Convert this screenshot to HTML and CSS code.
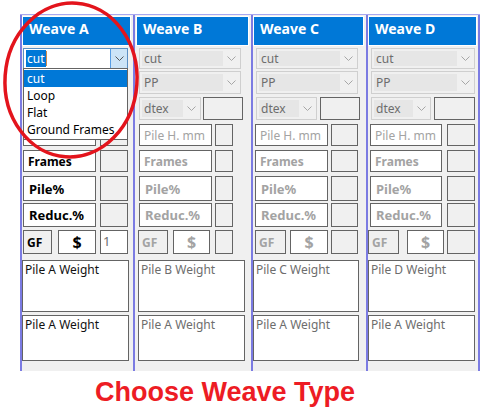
FILE: index.html
```html
<!DOCTYPE html>
<html>
<head>
<meta charset="utf-8">
<link rel="stylesheet" href="styles.css">
</head>
<body>
<div class="stage">
  <div class="panel">
    <div class="col col-a">
      <div class="hdr">Weave A</div>
      <div class="dd dd1 act">
        <span class="dd-val"><span class="sel-txt">cut</span><span class="caret"></span></span>
        <span class="dd-btn"><svg class="chev" width="9" height="5" viewBox="0 0 9 5"><polyline points="0.5,0.5 4.5,4.5 8.5,0.5"/></svg></span>
        <div class="dd-list">
          <div class="opt sel">cut</div>
          <div class="opt">Loop</div>
          <div class="opt">Flat</div>
          <div class="opt">Ground Frames</div>
        </div>
      </div>
      <div class="dd dd2"><span class="dd-val">PP</span><span class="dd-btn"><svg class="chev" width="9" height="5" viewBox="0 0 9 5"><polyline points="0.5,0.5 4.5,4.5 8.5,0.5"/></svg></span></div>
      <div class="line rowt"><div class="dd dtex"><span class="dd-val">dtex</span><span class="dd-btn"><svg class="chev" width="9" height="5" viewBox="0 0 9 5"><polyline points="0.5,0.5 4.5,4.5 8.5,0.5"/></svg></span></div><div class="box tbox"></div></div>
      <div class="line row"><div class="lbl">Pile H. mm</div><div class="box rbox"></div></div>
      <div class="line row"><div class="lbl">Frames</div><div class="box rbox"></div></div>
      <div class="line row-p"><div class="lbl big">Pile%</div><div class="box rbox"></div></div>
      <div class="line row-r"><div class="lbl big">Reduc.%</div><div class="box rbox"></div></div>
      <div class="line row-g"><div class="box gf">GF</div><div class="box usd">$</div><div class="box rbox num">1</div></div>
      <div class="ta ta1">Pile A Weight</div>
      <div class="ta ta2">Pile A Weight</div>
    </div>

    <div class="col col-b dis">
      <div class="hdr">Weave B</div>
      <div class="dd dd1"><span class="dd-val">cut</span><span class="dd-btn"><svg class="chev" width="9" height="5" viewBox="0 0 9 5"><polyline points="0.5,0.5 4.5,4.5 8.5,0.5"/></svg></span></div>
      <div class="dd dd2"><span class="dd-val">PP</span><span class="dd-btn"><svg class="chev" width="9" height="5" viewBox="0 0 9 5"><polyline points="0.5,0.5 4.5,4.5 8.5,0.5"/></svg></span></div>
      <div class="line rowt"><div class="dd dtex"><span class="dd-val">dtex</span><span class="dd-btn"><svg class="chev" width="9" height="5" viewBox="0 0 9 5"><polyline points="0.5,0.5 4.5,4.5 8.5,0.5"/></svg></span></div><div class="box tbox"></div></div>
      <div class="line row"><div class="lbl reg">Pile H. mm</div><div class="box rbox"></div></div>
      <div class="line row"><div class="lbl">Frames</div><div class="box rbox"></div></div>
      <div class="line row-p"><div class="lbl big">Pile%</div><div class="box rbox"></div></div>
      <div class="line row-r"><div class="lbl big">Reduc.%</div><div class="box rbox"></div></div>
      <div class="line row-g"><div class="box gf">GF</div><div class="box usd">$</div><div class="box rbox"></div></div>
      <div class="ta ta1">Pile B Weight</div>
      <div class="ta ta2">Pile A Weight</div>
    </div>

    <div class="col col-c dis">
      <div class="hdr">Weave C</div>
      <div class="dd dd1"><span class="dd-val">cut</span><span class="dd-btn"><svg class="chev" width="9" height="5" viewBox="0 0 9 5"><polyline points="0.5,0.5 4.5,4.5 8.5,0.5"/></svg></span></div>
      <div class="dd dd2"><span class="dd-val">PP</span><span class="dd-btn"><svg class="chev" width="9" height="5" viewBox="0 0 9 5"><polyline points="0.5,0.5 4.5,4.5 8.5,0.5"/></svg></span></div>
      <div class="line rowt"><div class="dd dtex"><span class="dd-val">dtex</span><span class="dd-btn"><svg class="chev" width="9" height="5" viewBox="0 0 9 5"><polyline points="0.5,0.5 4.5,4.5 8.5,0.5"/></svg></span></div><div class="box tbox"></div></div>
      <div class="line row"><div class="lbl reg">Pile H. mm</div><div class="box rbox"></div></div>
      <div class="line row"><div class="lbl">Frames</div><div class="box rbox"></div></div>
      <div class="line row-p"><div class="lbl big">Pile%</div><div class="box rbox"></div></div>
      <div class="line row-r"><div class="lbl big">Reduc.%</div><div class="box rbox"></div></div>
      <div class="line row-g"><div class="box gf">GF</div><div class="box usd">$</div><div class="box rbox"></div></div>
      <div class="ta ta1">Pile C Weight</div>
      <div class="ta ta2">Pile A Weight</div>
    </div>

    <div class="col col-d dis">
      <div class="hdr">Weave D</div>
      <div class="dd dd1"><span class="dd-val">cut</span><span class="dd-btn"><svg class="chev" width="9" height="5" viewBox="0 0 9 5"><polyline points="0.5,0.5 4.5,4.5 8.5,0.5"/></svg></span></div>
      <div class="dd dd2"><span class="dd-val">PP</span><span class="dd-btn"><svg class="chev" width="9" height="5" viewBox="0 0 9 5"><polyline points="0.5,0.5 4.5,4.5 8.5,0.5"/></svg></span></div>
      <div class="line rowt"><div class="dd dtex"><span class="dd-val">dtex</span><span class="dd-btn"><svg class="chev" width="9" height="5" viewBox="0 0 9 5"><polyline points="0.5,0.5 4.5,4.5 8.5,0.5"/></svg></span></div><div class="box tbox"></div></div>
      <div class="line row"><div class="lbl reg">Pile H. mm</div><div class="box rbox"></div></div>
      <div class="line row"><div class="lbl">Frames</div><div class="box rbox"></div></div>
      <div class="line row-p"><div class="lbl big">Pile%</div><div class="box rbox"></div></div>
      <div class="line row-r"><div class="lbl big">Reduc.%</div><div class="box rbox"></div></div>
      <div class="line row-g"><div class="box gf">GF</div><div class="box usd">$</div><div class="box rbox"></div></div>
      <div class="ta ta1">Pile D Weight</div>
      <div class="ta ta2">Pile A Weight</div>
    </div>
  </div>

  <div class="caption">Choose Weave Type</div>

  <svg class="ring" width="492" height="409" viewBox="0 0 492 409">
    <ellipse cx="71" cy="80" rx="66" ry="77" transform="rotate(4 71 80)"/>
  </svg>
</div>
</body>
</html>
```

FILE: styles.css
```css
* { box-sizing: border-box; }

body {
  margin: 0;
  background: #ffffff;
  font-family: "Noto Sans", "Open Sans", sans-serif;
  color: #000;
}

.stage {
  position: relative;
  width: 492px;
  height: 409px;
  padding: 14px 0 0 20px;
}

.panel {
  display: flex;
  width: 460px;
  height: 357px;
  background: #f0f0f0;
  border-top: 1px solid #a8a8f0;
}

.col {
  display: flex;
  flex-direction: column;
  border-left: 2px solid #7b7be2;
  flex: none;
}

.col-a { width: 113px;
  --hl: 0px; --hw: 109px;
  --dl: 1px; --dw: 105px;
  --tw: 62px; --tg: 2px; --bw: 40px;
  --ll: 1px; --lw: 73px; --lg: 4px; --rw: 28px;
  --gl: 1px; --gw: 29px; --g1: 6px; --sw: 38px; --g2: 4px;
  --al: 0px; --aw: 107px; }
.col-b { width: 118px;
  --hl: 1px; --hw: 113px;
  --dl: 4px; --dw: 102px;
  --tw: 62px; --tg: 2px; --bw: 40px;
  --ll: 4px; --lw: 73px; --lg: 3px; --rw: 18px;
  --gl: 3px; --gw: 30px; --g1: 5px; --sw: 37px; --g2: 5px;
  --al: 3px; --aw: 107px; }
.col-c { width: 115px;
  --hl: 0px; --hw: 111px;
  --dl: 3px; --dw: 102px;
  --tw: 61px; --tg: 3px; --bw: 40px;
  --ll: 2px; --lw: 73px; --lg: 3px; --rw: 27px;
  --gl: 2px; --gw: 31px; --g1: 4px; --sw: 38px; --g2: 3px;
  --al: 0px; --aw: 106px; }
.col-d { width: 114px; border-right: 2px solid #7b7be2;
  --hl: 0px; --hw: 109px;
  --dl: 3px; --dw: 104px;
  --tw: 60px; --tg: 3px; --bw: 41px;
  --ll: 2px; --lw: 72px; --lg: 5px; --rw: 28px;
  --gl: 0px; --gw: 31px; --g1: 8px; --sw: 37px; --g2: 3px;
  --al: 0px; --aw: 107px; }

/* header */
.hdr {
  margin: 1px 0 0 var(--hl);
  width: var(--hw);
  height: 30px;
  background: #0078d7;
  border: 1px solid #ffffff;
  color: #ffffff;
  font-weight: 700;
  font-size: 14px;
  line-height: 24px;
  padding-left: 6px;
}

/* combobox */
.dd {
  display: flex;
  align-items: stretch;
  border: 1px solid #cfcfcf;
  background: #f0f0f0;
  padding: 2px 0 2px 2px;
  font-size: 12px;
}
.dd1 { margin: 2px 0 0 var(--dl); width: var(--dw); height: 21px; }
.dd2 { margin: 2px 0 0 var(--dl); width: var(--dw); height: 23px; }
.dd-val {
  flex: 1;
  display: flex;
  align-items: center;
  background: #e6e6e6;
  color: #6d6d6d;
  padding-left: 2px;
}
.dd-btn {
  width: 17px;
  flex: none;
  display: flex;
  align-items: center;
  justify-content: center;
}
.chev { fill: none; stroke: #a6a6a6; stroke-width: 1; }

.dd.act {
  position: relative;
  z-index: 3;
  background: #ffffff;
  border-color: #5a8fc4;
  padding: 1px 0 1px 1px;
}
.dd.act .dd-val { background: #ffffff; color: #000; padding-left: 1px; }
.sel-txt { background: #0078d7; color: #ffffff; padding: 0 1px; line-height: 17px; }
.caret { width: 1px; height: 15px; background: #d28b4a; }
.dd.act .dd-btn { background: #cce4f7; border-left: 1px solid #569de5; margin: -1px 0 -1px 0; }
.dd.act .chev { stroke: #555555; }

.dd-list {
  position: absolute;
  left: -1px;
  top: 100%;
  width: 105px;
  background: #ffffff;
  border: 1px solid #646464;
  padding: 1px 0 1px 0;
}
.opt {
  height: 17px;
  line-height: 17px;
  padding-left: 3px;
  font-size: 12px;
  color: #000;
  white-space: nowrap;
}
.opt.sel { background: #0078d7; color: #ffffff; }

/* rows */
.line { display: flex; flex: none; }
.rowt { margin: 3px 0 0 var(--dl); height: 23px; gap: var(--tg); }
.row { margin: 4px 0 0 var(--ll); height: 22px; gap: var(--lg); }
.row-p { margin: 4px 0 0 var(--ll); height: 25px; gap: var(--lg); }
.row-r { margin: 2px 0 0 var(--ll); height: 24px; gap: var(--lg); }
.row-g { margin: 3px 0 0 var(--gl); height: 24px; }

.dtex { width: var(--tw); }
.tbox { width: var(--bw); }

.box {
  border: 1px solid #646464;
  background: #f0f0f0;
}
.rbox { width: var(--rw); }

.lbl {
  width: var(--lw);
  border: 1px solid #646464;
  background: #ffffff;
  font-weight: 700;
  font-size: 12px;
  display: flex;
  align-items: center;
  padding-left: 4px;
  color: #000;
  white-space: nowrap;
}
.lbl.big { font-size: 13px; padding-left: 5px; }
.lbl.reg { font-weight: 400; }

.gf {
  width: var(--gw);
  font-weight: 700;
  font-size: 12px;
  display: flex;
  align-items: center;
  padding-left: 3px;
}
.usd {
  width: var(--sw);
  margin-left: var(--g1);
  margin-right: var(--g2);
  background: #ffffff;
  font-weight: 700;
  font-size: 16px;
  display: flex;
  align-items: center;
  justify-content: center;
}
.num {
  background: #ffffff;
  color: #6d6d6d;
  font-size: 13px;
  padding: 1px 0 0 2px;
  line-height: 18px;
}

/* text areas */
.ta {
  margin-left: var(--al);
  width: var(--aw);
  border: 1px solid #646464;
  background: #ffffff;
  font-size: 12px;
  line-height: 16px;
  padding: 1px 2px;
  color: #111;
}
.ta1 { margin-top: 6px; height: 52px; }
.ta2 { margin-top: 3px; height: 46px; }

/* disabled columns */
.dis .lbl, .dis .gf, .dis .usd { color: #a3a3a3; }
.dis .ta { color: #6d6d6d; }

/* caption */
.caption {
  margin: 6px 0 0 75px;
  font-family: "Liberation Sans", Arial, sans-serif;
  font-weight: 700;
  font-size: 27px;
  line-height: 31px;
  color: #ed1c24;
  white-space: nowrap;
}

/* annotation ring */
.ring {
  position: absolute;
  left: 0;
  top: 0;
  z-index: 5;
  pointer-events: none;
}
.ring ellipse { fill: none; stroke: #e3141c; stroke-width: 3.5; }
```
